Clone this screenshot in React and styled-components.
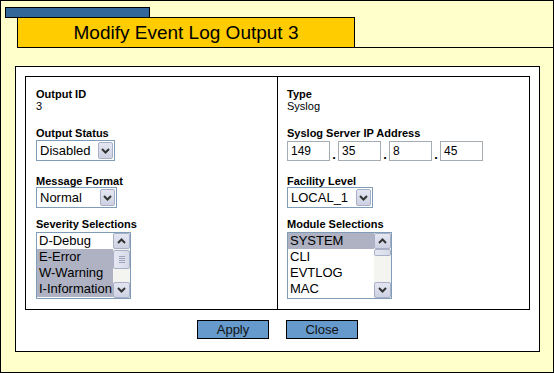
import React from 'react';
import styled, { createGlobalStyle } from 'styled-components';

const Global = createGlobalStyle`
  html, body { margin: 0; padding: 0; background: #FFFFCC; }
  body { font-family: "Liberation Sans", Arial, sans-serif; }
  * { box-sizing: border-box; }
`;

const Page = styled.div`
  width: 554px;
  height: 373px;
  border: 1px solid #000;
  background: #FFFFCC;
  overflow: hidden;
  display: flex;
  flex-direction: column;
`;

const TabBar = styled.div`
  margin: 6px 0 0 4px;
  width: 145px;
  height: 11px;
  background: #336699;
  border: 1px solid #000;
`;

const TitleRow = styled.div`
  margin: -1px 0 0 16px;
  height: 31px;
  border-bottom: 1px solid #000;
  display: flex;
`;

const TitleBox = styled.div`
  width: 338px;
  height: 30px;
  background: #FFCC00;
  border: 1px solid #000;
  border-bottom: none;
  display: flex;
  align-items: center;
  justify-content: center;
  font: 19px "Liberation Sans", Arial, sans-serif;
  color: #000;
`;

const Panel = styled.div`
  margin: 18px 0 0 14px;
  width: 525px;
  height: 286px;
  background: #fff;
  border: 1px solid #000;
  padding: 9px;
  display: flex;
  flex-direction: column;
`;

const Grid = styled.div`
  display: grid;
  grid-template-columns: 251px 1fr;
  border: 1px solid #000;
  height: 234px;
`;

const Column = styled.div`
  padding: 11px 0 0 ${p => p.$pl}px;
  border-left: ${p => (p.$divider ? '1px solid #000' : 'none')};
`;

const Field = styled.div`
  margin-top: ${p => p.$mt || 0}px;
  display: flex;
  flex-direction: column;
  align-items: flex-start;
`;

const Label = styled.div`
  font: bold 11px/12px "Liberation Sans", Arial, sans-serif;
  color: #000;
`;

const Value = styled.div`
  font: 11px/12px "Liberation Sans", Arial, sans-serif;
  color: #000;
`;

const SelectBox = styled.div`
  width: ${p => p.$w}px;
  height: 21px;
  margin-top: ${p => p.$mt || 0}px;
  border: 1px solid #7F9DB9;
  background: #fff;
  padding: 1px;
  display: flex;
  align-items: stretch;
`;

const SelectText = styled.div`
  flex: 1;
  padding-left: 2px;
  font: 13px/17px "Liberation Sans", Arial, sans-serif;
  color: #000;
  white-space: nowrap;
  overflow: hidden;
`;

const ArrowButton = styled.div`
  width: 15px;
  border: 1px solid #A9AFC4;
  border-radius: 2px;
  background: linear-gradient(#E4E7F2, #CDD1E2);
  display: flex;
  align-items: center;
  justify-content: center;
`;

const ListBox = styled.div`
  width: ${p => p.$w}px;
  height: 67px;
  margin-top: 2px;
  border: 1px solid #7F9DB9;
  background: #fff;
  display: flex;
`;

const Options = styled.div`
  flex: 1;
  overflow: hidden;
`;

const Option = styled.div`
  height: 16px;
  padding-left: 2px;
  font: 13px/16px "Liberation Sans", Arial, sans-serif;
  white-space: nowrap;
  color: #000;
  background: ${p => (p.$selected ? '#AEB2C3' : 'transparent')};
`;

const ScrollBar = styled.div`
  width: 17px;
  flex: none;
  display: flex;
  flex-direction: column;
  background: #F4F4F0;
`;

const ScrollBtn = styled.div`
  height: 16px;
  border: 1px solid #A9AFC4;
  border-radius: 2px;
  background: linear-gradient(#E4E7F2, #CDD1E2);
  display: flex;
  align-items: center;
  justify-content: center;
`;

const Track = styled.div`
  flex: 1;
  position: relative;
`;

const Thumb = styled.div`
  position: absolute;
  left: 0;
  right: 0;
  border: 1px solid #A9AFC4;
  border-radius: 2px;
  background: linear-gradient(90deg, #E6E9F4, #D6DAE8);
  display: flex;
  flex-direction: column;
  align-items: center;
  justify-content: center;
  gap: 1px;
`;

const Grip = styled.div`
  width: 6px;
  height: 1px;
  background: #9DA3B8;
`;

const IpRow = styled.div`
  display: flex;
  align-items: flex-end;
  margin-top: 2px;
`;

const IpInput = styled.input`
  width: 43px;
  height: 20px;
  border: 1px solid #A5ACB2;
  padding: 0 3px;
  margin: 0;
  font: 12px "Liberation Sans", Arial, sans-serif;
  color: #000;
  background: #fff;
  outline: none;
`;

const Dot = styled.span`
  width: 8px;
  text-align: center;
  font: bold 13px/13px "Liberation Sans", Arial, sans-serif;
  color: #000;
`;

const ButtonRow = styled.div`
  margin-top: 10px;
  display: flex;
  justify-content: center;
  gap: 17px;
`;

const Button = styled.button`
  width: 72px;
  height: 19px;
  margin: 0;
  padding: 0;
  border: 1px solid #000;
  background: #6699CC;
  color: #111;
  font: 13px/17px "Liberation Sans", Arial, sans-serif;
  cursor: pointer;
`;

const Chevron = ({ up }) => (
  <svg width="9" height="6" viewBox="0 0 9 6">
    <path
      d={up ? 'M1 5 L4.5 1.5 L8 5' : 'M1 1 L4.5 4.5 L8 1'}
      fill="none"
      stroke="#333"
      strokeWidth="2"
    />
  </svg>
);

const Select = ({ w, mt, value }) => (
  <SelectBox $w={w} $mt={mt}>
    <SelectText>{value}</SelectText>
    <ArrowButton>
      <Chevron />
    </ArrowButton>
  </SelectBox>
);

const List = ({ w, items, thumbTop, thumbHeight }) => (
  <ListBox $w={w}>
    <Options>
      {items.map(it => (
        <Option key={it.label} $selected={it.selected}>{it.label}</Option>
      ))}
    </Options>
    <ScrollBar>
      <ScrollBtn><Chevron up /></ScrollBtn>
      <Track>
        <Thumb style={{ top: thumbTop, height: thumbHeight }}>
          {thumbHeight > 10 && (<><Grip /><Grip /><Grip /><Grip /></>)}
        </Thumb>
      </Track>
      <ScrollBtn><Chevron /></ScrollBtn>
    </ScrollBar>
  </ListBox>
);

export default function App() {
  return (
    <>
      <Global />
      <Page>
        <TabBar />
        <TitleRow>
          <TitleBox>Modify Event Log Output 3</TitleBox>
        </TitleRow>
        <Panel>
          <Grid>
            <Column $pl={10}>
              <Field>
                <Label>Output ID</Label>
                <Value>3</Value>
              </Field>
              <Field $mt={15}>
                <Label>Output Status</Label>
                <Select w={79} mt={1} value="Disabled" />
              </Field>
              <Field $mt={14}>
                <Label>Message Format</Label>
                <Select w={81} value="Normal" />
              </Field>
              <Field $mt={10}>
                <Label>Severity Selections</Label>
                <List
                  w={95}
                  thumbTop={1}
                  thumbHeight={19}
                  items={[
                    { label: 'D-Debug' },
                    { label: 'E-Error', selected: true },
                    { label: 'W-Warning', selected: true },
                    { label: 'I-Information', selected: true },
                  ]}
                />
              </Field>
            </Column>
            <Column $pl={9} $divider>
              <Field>
                <Label>Type</Label>
                <Value>Syslog</Value>
              </Field>
              <Field $mt={15}>
                <Label>Syslog Server IP Address</Label>
                <IpRow>
                  <IpInput readOnly value="149" />
                  <Dot>.</Dot>
                  <IpInput readOnly value="35" />
                  <Dot>.</Dot>
                  <IpInput readOnly value="8" />
                  <Dot>.</Dot>
                  <IpInput readOnly value="45" />
                </IpRow>
              </Field>
              <Field $mt={14}>
                <Label>Facility Level</Label>
                <Select w={86} value="LOCAL_1" />
              </Field>
              <Field $mt={10}>
                <Label>Module Selections</Label>
                <List
                  w={105}
                  thumbTop={0}
                  thumbHeight={7}
                  items={[
                    { label: 'SYSTEM', selected: true },
                    { label: 'CLI' },
                    { label: 'EVTLOG' },
                    { label: 'MAC' },
                  ]}
                />
              </Field>
            </Column>
          </Grid>
          <ButtonRow>
            <Button>Apply</Button>
            <Button>Close</Button>
          </ButtonRow>
        </Panel>
      </Page>
    </>
  );
}
